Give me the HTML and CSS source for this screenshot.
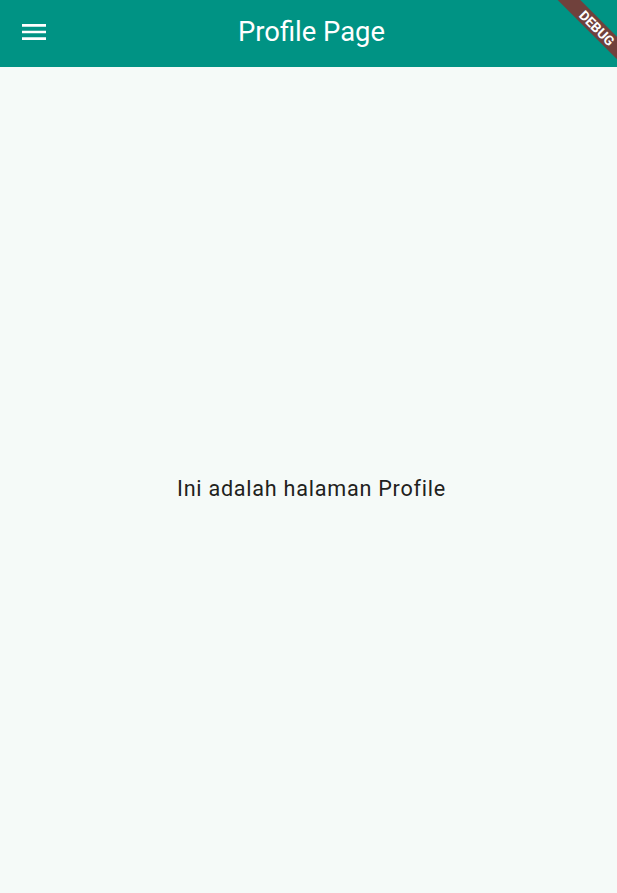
FILE: index.html
```html
<!DOCTYPE html>
<html>
<head>
<meta charset="utf-8">
<link rel="stylesheet" href="styles.css">
</head>
<body>
<div class="app">
  <header class="appbar">
    <button class="menu" aria-label="menu">
      <svg width="32" height="32" viewBox="0 0 24 24"><path d="M3 18h18v-2H3v2zm0-5h18v-2H3v2zm0-7v2h18V6H3z" fill="#fff"/></svg>
    </button>
    <h1 class="title">Profile Page</h1>
  </header>
  <main class="body">
    <p class="msg">Ini adalah halaman Profile</p>
  </main>
  <div class="banner"><span>DEBUG</span></div>
</div>
</body>
</html>
```
FILE: styles.css
```css
html, body { margin: 0; padding: 0; }
body { font-family: Roboto, "Noto Sans", sans-serif; background: #f5faf8; overflow: hidden; }
.app { position: relative; width: 617px; height: 893px; display: flex; flex-direction: column; overflow: hidden; }
.appbar { height: 67px; background: #009384; display: flex; align-items: center; flex: none; }
.menu { width: 68px; height: 67px; border: 0; background: none; padding: 0 0 3px 18px; display: flex; align-items: center; flex: none; }
.title { flex: 1; margin: 0 62px 0 0; padding-bottom: 4px; text-align: center; color: #fff; font-weight: 400; font-size: 27.4px; line-height: 32px; }
.body { flex: 1; display: flex; align-items: center; justify-content: center; padding-top: 16px; padding-left: 6px; }
.msg { margin: 0; font-size: 21.6px; color: #1f2220; letter-spacing: 0.75px; }
.banner { position: absolute; top: 0; right: 0; width: 100px; height: 100px; overflow: hidden; pointer-events: none; }
.banner span { position: absolute; top: 20px; right: -45px; width: 130px; height: 16px; transform: rotate(45deg); background: rgba(160, 30, 30, 0.7); color: #fff; font-weight: 700; font-size: 13.5px; line-height: 16px; text-align: center; }
```
